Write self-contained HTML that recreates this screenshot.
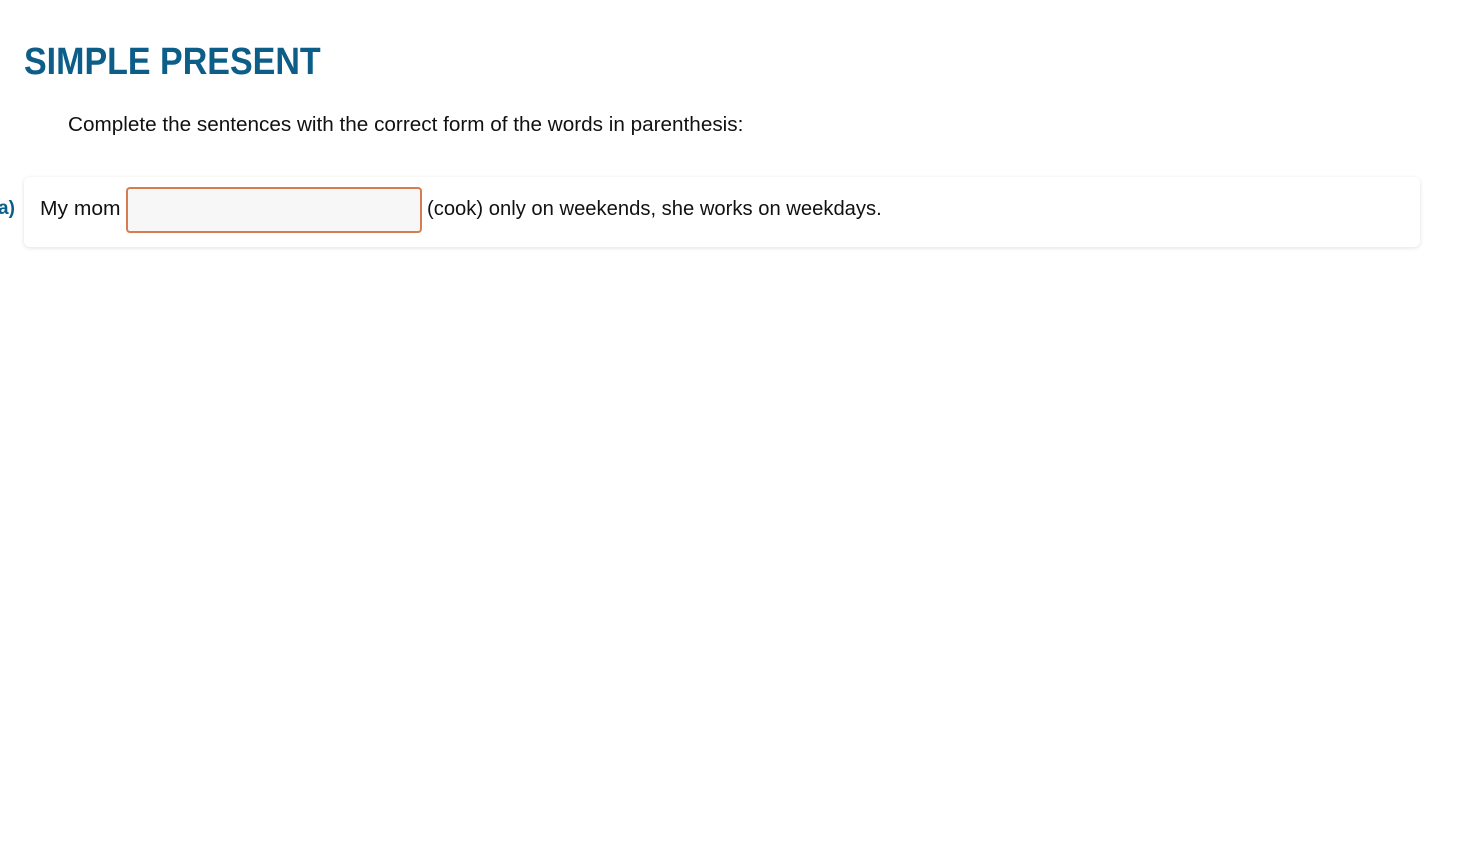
<!DOCTYPE html>
<html><head><style>
html,body{margin:0;background:#fff;width:1460px;height:850px;overflow:hidden;font-family:"Liberation Sans",sans-serif;}
h1{position:absolute;left:24px;top:41px;margin:0;font-size:38px;font-weight:bold;color:#0c5d88;letter-spacing:0;transform:scaleX(0.895);transform-origin:left;}
.inst{position:absolute;left:68px;top:114px;font-size:20px;color:#111;transform:scaleX(1.035);transform-origin:left;white-space:nowrap;}
.lbl{position:absolute;left:-2px;top:198px;font-size:19px;font-weight:bold;color:#0c5d88;}
.card{position:absolute;left:24px;top:177px;width:1396px;height:70px;background:#fff;border-radius:6px;box-shadow:0 1px 4px rgba(0,0,0,0.12);}
.t{position:absolute;top:198px;font-size:20px;color:#111;white-space:nowrap;transform:scaleX(1.01);transform-origin:left;}
.inp{position:absolute;left:126px;top:187px;width:292px;height:42px;border:2px solid #d87b4e;border-radius:4px;background:#f7f7f7;}
</style></head><body>
<h1>SIMPLE PRESENT</h1>
<div class="inst">Complete the sentences with the correct form of the words in parenthesis:</div>
<div class="card"></div>
<div class="lbl">a)</div>
<div class="t" style="left:40px;transform:scaleX(1.05)">My mom</div>
<div class="inp"></div>
<div class="t" style="left:427px">(cook) only on weekends, she works on weekdays.</div>
</body></html>
